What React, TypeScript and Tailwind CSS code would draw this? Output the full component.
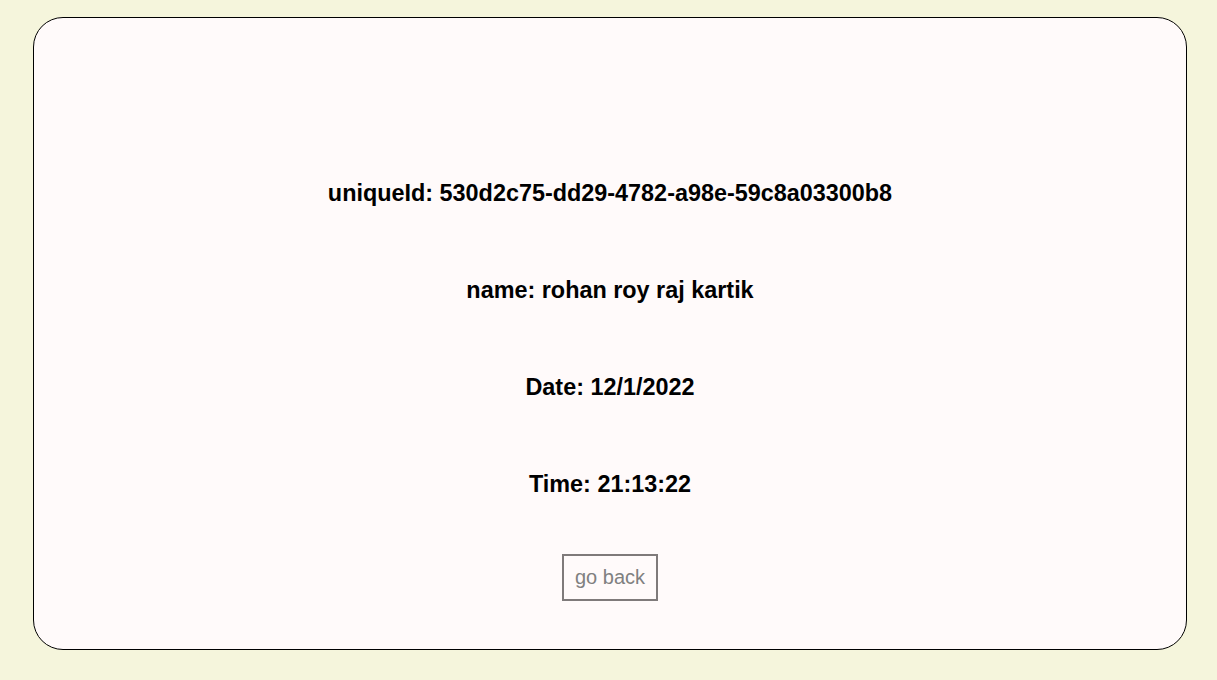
import React from "react";

export default function App() {
  const rows = [
    "uniqueId: 530d2c75-dd29-4782-a98e-59c8a03300b8",
    "name: rohan roy raj kartik",
    "Date: 12/1/2022",
    "Time: 21:13:22",
  ];
  return (
    <div
      className="w-[1217px] h-[680px] bg-[#f5f5dc] pt-[17px] pl-[33px] overflow-hidden"
      style={{ fontFamily: '"Liberation Sans", Arial, sans-serif' }}
    >
      <div className="w-[1154px] h-[633px] bg-[#fffafa] border border-black rounded-[30px] flex flex-col items-center pt-[162px]">
        <div className="flex flex-col items-center gap-[70px]">
          {rows.map((r) => (
            <div key={r} className="text-[23.4px] leading-[27px] font-bold text-black">
              {r}
            </div>
          ))}
        </div>
        <button className="mt-[56px] border-2 border-[#7f7a7a] px-[11px] h-[47px] text-[20px] leading-[23px] text-[#808080] bg-transparent">
          go back
        </button>
      </div>
    </div>
  );
}
